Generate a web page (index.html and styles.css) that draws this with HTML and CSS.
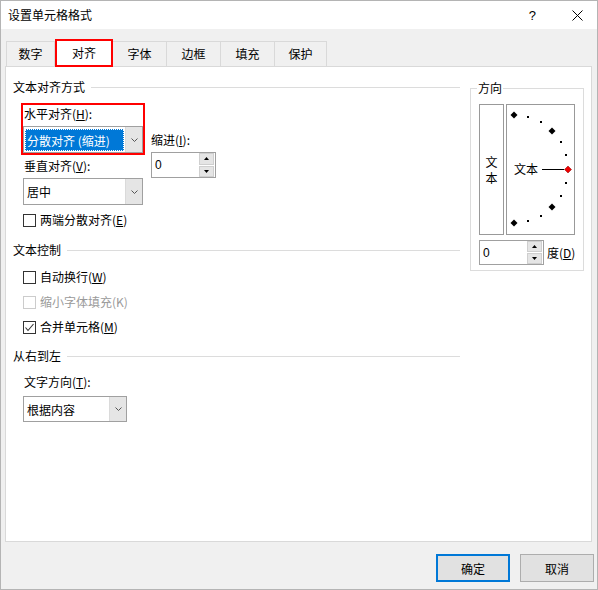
FILE: index.html
```html
<!DOCTYPE html>
<html lang="zh-CN">

<head>
    <meta charset="UTF-8">
    <title>设置单元格格式</title>
    <link rel="stylesheet" href="styles.css">
</head>

<body>

    <div class="dialog">
        <div class="titlebar">
            <span class="title">设置单元格格式</span>
            <span class="help">?</span>
            <svg class="close" width="11" height="11" viewBox="0 0 11 11">
                <path d="M0.5 0.5 L10.5 10.5 M10.5 0.5 L0.5 10.5" stroke="#000" stroke-width="1" fill="none" />
            </svg>
        </div>

        <div class="body">
            <div class="tabs">
                <div class="tab tab-num">数字</div>
                <div class="tab active">对齐</div>
                <div class="tab tab-font">字体</div>
                <div class="tab tab-border">边框</div>
                <div class="tab tab-fill">填充</div>
                <div class="tab tab-protect">保护</div>
            </div>

            <div class="panel">
                <div class="left">
                    <div class="group-title">文本对齐方式</div>

                    <div class="align-row">
                        <div class="align-col">
                            <div class="focus-box">
                                <div class="label in-box">水平对齐(<u>H</u>):</div>
                                <div class="select focused">
                                    <div class="select-value"><span class="picked">分散对齐 (缩进)</span></div>
                                    <div class="select-drop">
                                        <svg width="7" height="4" viewBox="0 0 7 4">
                                            <polyline points="0.5,0.5 3.5,3.5 6.5,0.5" stroke="#555" fill="none" />
                                        </svg>
                                    </div>
                                </div>
                            </div>

                            <div class="label field-label">垂直对齐(<u>V</u>):</div>
                            <div class="select v-select">
                                <div class="select-value">居中</div>
                                <div class="select-drop">
                                    <svg width="7" height="4" viewBox="0 0 7 4">
                                        <polyline points="0.5,0.5 3.5,3.5 6.5,0.5" stroke="#555" fill="none" />
                                    </svg>
                                </div>
                            </div>
                        </div>

                        <div class="indent-col">
                            <div class="label">缩进(<u>I</u>):</div>
                            <div class="spin indent-spin">
                                <div class="spin-value">0</div>
                                <div class="spin-btns">
                                    <div class="spin-btn">
                                        <svg width="5" height="3" viewBox="0 0 5 3"><polygon points="0,3 2.5,0 5,3" fill="#000" /></svg>
                                    </div>
                                    <div class="spin-btn">
                                        <svg width="5" height="3" viewBox="0 0 5 3"><polygon points="0,0 5,0 2.5,3" fill="#000" /></svg>
                                    </div>
                                </div>
                            </div>
                        </div>
                    </div>

                    <div class="check check-justify">
                        <span class="box"></span>
                        <span>两端分散对齐(<u>E</u>)</span>
                    </div>

                    <div class="group-title group-control">文本控制</div>

                    <div class="check check-wrap">
                        <span class="box"></span>
                        <span>自动换行(<u>W</u>)</span>
                    </div>
                    <div class="check disabled">
                        <span class="box"></span>
                        <span>缩小字体填充(K)</span>
                    </div>
                    <div class="check">
                        <span class="box">
                            <svg width="11" height="11" viewBox="0 0 11 11">
                                <polyline points="1.5,5.5 4,8.5 9.5,2" stroke="#333" stroke-width="1.1" fill="none" />
                            </svg>
                        </span>
                        <span>合并单元格(<u>M</u>)</span>
                    </div>

                    <div class="group-title group-rtl">从右到左</div>

                    <div class="label field-label dir-label">文字方向(<u>T</u>):</div>
                    <div class="select dir-select">
                        <div class="select-value">根据内容</div>
                        <div class="select-drop">
                            <svg width="7" height="4" viewBox="0 0 7 4">
                                <polyline points="0.5,0.5 3.5,3.5 6.5,0.5" stroke="#555" fill="none" />
                            </svg>
                        </div>
                    </div>
                </div>

                <fieldset class="orient">
                    <legend>方向</legend>
                    <div class="orient-boxes">
                        <div class="vertical-text">
                            <span>文</span>
                            <span>本</span>
                        </div>
                        <div class="dial">
                            <svg width="67" height="129" viewBox="0 0 67 129">
                                <!-- big marks every 45 degrees, small ones every 15 -->
                                <polygon points="7,6.5 10.5,10 7,13.5 3.5,10" fill="#000" />
                                <polygon points="45,22.5 48.5,26 45,29.5 41.5,26" fill="#000" />
                                <polygon points="45,98.5 48.5,102 45,105.5 41.5,102" fill="#000" />
                                <polygon points="7,114.5 10.5,118 7,121.5 3.5,118" fill="#000" />
                                <polygon points="61,61 64.5,64.5 61,68 57.5,64.5" fill="#e00" stroke="#800" stroke-width="0.5" />
                                <rect x="20" y="11" width="2" height="2" fill="#000" />
                                <rect x="33" y="16" width="2" height="2" fill="#000" />
                                <rect x="53" y="36" width="2" height="2" fill="#000" />
                                <rect x="58" y="49" width="2" height="2" fill="#000" />
                                <rect x="58" y="77" width="2" height="2" fill="#000" />
                                <rect x="53" y="90" width="2" height="2" fill="#000" />
                                <rect x="33" y="110" width="2" height="2" fill="#000" />
                                <rect x="20" y="115" width="2" height="2" fill="#000" />
                                <line x1="35" y1="64.5" x2="57" y2="64.5" stroke="#000" stroke-width="1" />
                                <text x="7" y="69" class="dial-text">文本</text>
                            </svg>
                        </div>
                    </div>
                    <div class="degree-row">
                        <div class="spin degree-spin">
                            <div class="spin-value">0</div>
                            <div class="spin-btns">
                                <div class="spin-btn">
                                    <svg width="5" height="3" viewBox="0 0 5 3"><polygon points="0,3 2.5,0 5,3" fill="#000" /></svg>
                                </div>
                                <div class="spin-btn">
                                    <svg width="5" height="3" viewBox="0 0 5 3"><polygon points="0,0 5,0 2.5,3" fill="#000" /></svg>
                                </div>
                            </div>
                        </div>
                        <span class="degree">度(<u>D</u>)</span>
                    </div>
                </fieldset>
            </div>

            <div class="footer">
                <button class="btn primary">确定</button>
                <button class="btn">取消</button>
            </div>
        </div>
    </div>

</body>

</html>
```

FILE: styles.css
```css
* {
    box-sizing: border-box;
}

body {
    margin: 0;
    font-family: "Noto Sans CJK SC", "Liberation Sans", sans-serif;
    font-size: 12px;
    color: #000;
    background: #fff;
}

u {
    text-decoration: underline;
    text-underline-offset: 1px;
}

.dialog {
    width: 598px;
    height: 590px;
    border: 1px solid #b4b4b4;
    display: flex;
    flex-direction: column;
    background: #f0f0f0;
}

/* title bar */

.titlebar {
    height: 28px;
    flex: none;
    background: #fff;
    display: flex;
    align-items: center;
    padding-left: 7px;
}

.title {
    flex: 1;
    line-height: 16px;
}

.help {
    font-family: "Liberation Sans", sans-serif;
    font-size: 13px;
    margin-right: 36px;
}

.close {
    margin-right: 14px;
}

/* tabs */

.tabs {
    display: flex;
    align-items: flex-end;
    padding: 10px 0 0 5px;
}

.tab {
    height: 25px;
    border: 1px solid #d9d9d9;
    border-bottom: none;
    display: flex;
    align-items: center;
    justify-content: center;
    line-height: 16px;
}

.tab + .tab {
    border-left: none;
}

.tab-num { width: 49px; }
.tab-font { width: 54px; }
.tab-border { width: 54px; }
.tab-fill { width: 54px; }
.tab-protect { width: 52px; }

.tab.active {
    width: 58px;
    height: 28px;
    margin-bottom: -1px;
    border: 2px solid #f00;
    background: #fff;
    position: relative;
    z-index: 1;
}

/* panel */

.panel {
    height: 476px;
    margin: 0 5px 0 4px;
    background: #fff;
    border: 1px solid #d9d9d9;
    display: flex;
    align-items: flex-start;
    padding: 12px 0 0 7px;
}

.left {
    width: 447px;
}

.label {
    line-height: 16px;
}

.group-title {
    display: flex;
    align-items: center;
    line-height: 16px;
}

.group-title::after {
    content: "";
    flex: 1;
    height: 1px;
    background: #dcdcdc;
    margin-left: 6px;
}

.group-control {
    margin-top: 14px;
}

.group-rtl {
    margin-top: 13px;
}

.align-row {
    display: flex;
    align-items: flex-start;
}

.focus-box {
    width: 124px;
    margin: 8px 0 0 8px;
    border: 2px solid #f00;
    padding-top: 1px;
}

.in-box {
    padding-left: 1px;
}

.field-label {
    margin: 3px 0 0 11px;
}

.dir-label {
    margin-top: 10px;
}

.indent-col {
    margin-left: 6px;
    padding-top: 37px;
}

/* combo boxes */

.select {
    display: flex;
    width: 120px;
    height: 27px;
    border: 1px solid #a0a0a0;
    background: #fff;
}

.focus-box .select {
    margin-top: 4px;
}

.v-select {
    margin: 4px 0 0 10px;
}

.dir-select {
    width: 104px;
    height: 26px;
    margin: 6px 0 0 10px;
}

.select-value {
    flex: 1;
    display: flex;
    align-items: center;
    padding-left: 3px;
}

.focused .select-value {
    padding: 2px 1px 1px 1px;
    align-items: stretch;
}

.picked {
    flex: 1;
    display: flex;
    align-items: center;
    padding-left: 2px;
    background: #0078d7;
    color: #fff;
    outline: 1px dotted #fff;
    outline-offset: -1px;
}

.select-drop {
    width: 17px;
    background: #e5e5e5;
    border-left: 1px solid #dadada;
    display: flex;
    align-items: center;
    justify-content: center;
}

/* spin boxes */

.spin {
    display: flex;
    width: 65px;
    height: 26px;
    border: 1px solid #a0a0a0;
    background: #fff;
    margin-top: 4px;
    flex: none;
}

.spin-value {
    flex: 1;
    display: flex;
    align-items: center;
    padding-left: 3px;
    font-family: "Liberation Sans", sans-serif;
}

.spin-btns {
    width: 16px;
    display: flex;
    flex-direction: column;
    gap: 1px;
    padding: 0 1px 0 0;
}

.spin-btn {
    flex: 1;
    background: #e5e5e5;
    border: 1px solid #cfcfcf;
    display: flex;
    align-items: center;
    justify-content: center;
}

/* check boxes */

.check {
    display: flex;
    align-items: center;
    height: 16px;
    margin: 9px 0 0 10px;
    line-height: 16px;
}

.check-justify {
    margin-top: 7px;
}

.check-wrap {
    margin-top: 11px;
}

.check .box {
    width: 13px;
    height: 13px;
    border: 1px solid #333;
    background: #fff;
    margin-right: 4px;
    display: flex;
    align-items: center;
    justify-content: center;
}

.check.disabled {
    color: #9a9a9a;
}

.check.disabled .box {
    border-color: #cccccc;
}

/* orientation */

.orient {
    width: 114px;
    margin: 1px 0 0 10px;
    padding: 8px 0 5px 8px;
    border: 1px solid #dcdcdc;
    min-width: 0;
}

.orient legend {
    padding: 0 1px;
    margin-left: -2px;
    line-height: 16px;
}

.orient-boxes {
    display: flex;
    gap: 2px;
}

.vertical-text {
    width: 25px;
    height: 131px;
    border: 1px solid #999;
    display: flex;
    flex-direction: column;
    align-items: center;
    justify-content: center;
    line-height: 16px;
}

.dial {
    width: 69px;
    height: 131px;
    border: 1px solid #999;
}

.dial svg {
    display: block;
}

.dial-text {
    font-family: "Noto Sans CJK SC", sans-serif;
    font-size: 12px;
}

.degree-row {
    display: flex;
    align-items: center;
    margin-top: 5px;
    white-space: nowrap;
}

.degree-spin {
    height: 25px;
    margin-top: 0;
}

.degree {
    margin-left: 3px;
    line-height: 16px;
}

/* footer */

.footer {
    display: flex;
    justify-content: flex-end;
    gap: 10px;
    margin-top: 12px;
    padding-right: 3px;
}

.btn {
    width: 74px;
    height: 28px;
    background: #e1e1e1;
    border: 1px solid #adadad;
    font-family: "Noto Sans CJK SC", sans-serif;
    font-size: 12px;
    color: #000;
    padding: 0;
}

.btn.primary {
    border: 2px solid #0078d7;
}
```
